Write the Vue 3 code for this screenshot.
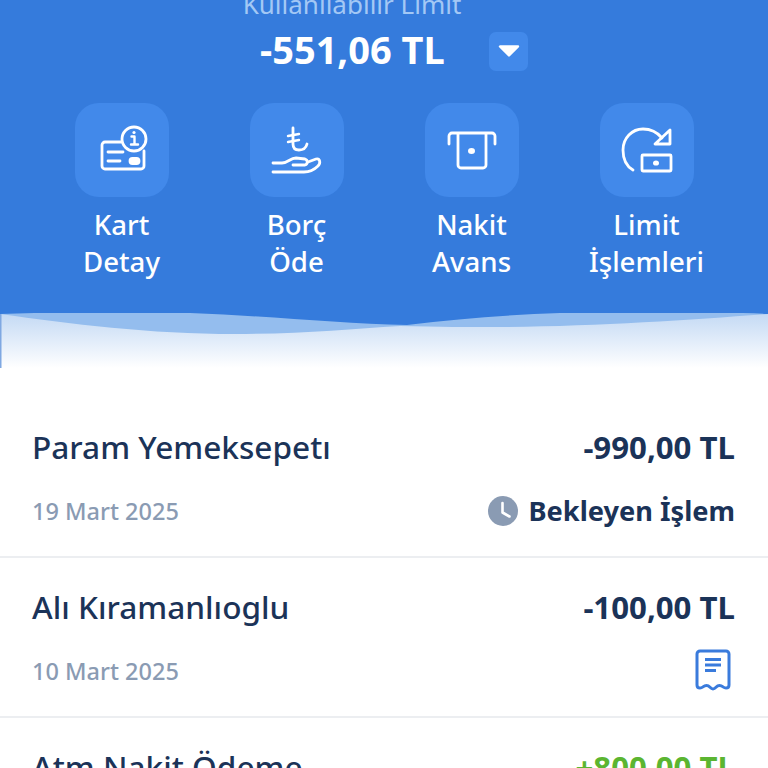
<template>
  <div class="screen">
    <section class="hero">
      <p class="limit-label">Kullanılabilir Limit</p>
      <div class="limit-row">
        <span class="limit-value">-551,06 TL</span>
        <button class="toggle-btn">
          <svg width="22" height="12" viewBox="0 0 22 12"><path d="M2 1.500h18L11 10.500z" fill="#fff" stroke="#fff" stroke-width="2.400" stroke-linejoin="round" /></svg>
        </button>
      </div>
      <div class="actions">
        <div v-for="action in actions" :key="action.id" class="action">
          <div class="action-tile">
            <svg v-if="action.id === 'card'" class="action-icon" viewBox="0 0 94 94">
              <path d="M46 39H30a3 3 0 0 0-3 3v21a3 3 0 0 0 3 3h36a3 3 0 0 0 3-3V48" />
              <path d="M33 49h15M33 58h12" />
              <rect x="55" y="55.500" width="9" height="5" rx="2.500" fill="#fff" />
              <circle cx="59" cy="36" r="12" />
              <path d="M56.500 33.500h3v8M56 41.500h7" stroke-width="2.400" />
              <circle cx="59" cy="29.500" r="1.600" fill="#fff" stroke="none" />
            </svg>
            <svg v-else-if="action.id === 'debt'" class="action-icon" viewBox="0 0 94 94">
              <path d="M43 25v16c0 4 2 6 6 6s7-2 8-6" />
              <path d="M38 33l11-2M38 39l11-2" stroke-width="2.400" />
              <path d="M23 60h9c6 0 8-5 14-5l9 1c3 1 3 5 0 6H43" />
              <path d="M58 59l8-3c4-1 5 4 2 7-4 4-8 6-14 6H23" />
            </svg>
            <svg v-else-if="action.id === 'cash'" class="action-icon" viewBox="0 0 94 94">
              <path d="M24 41v-8a3 3 0 0 1 3-3h40a3 3 0 0 1 3 3v8" />
              <path d="M33 31v31a3 3 0 0 0 3 3h22a3 3 0 0 0 3-3V31" />
              <ellipse cx="46.500" cy="48" rx="3.500" ry="3" fill="#fff" stroke="none" />
            </svg>
            <svg v-else class="action-icon" viewBox="0 0 94 94">
              <path d="M33 67C26 63 23 55 23 47c0-12 9-21 20-21 8 0 14 3 19 9" />
              <path d="M70 27v14H55z" stroke-linejoin="round" />
              <rect x="42" y="52" width="29" height="16" rx="1" />
              <ellipse cx="56" cy="60" rx="3" ry="2.600" fill="#fff" stroke="none" />
            </svg>
          </div>
          <div class="action-label">
            <span>{{ action.top }}</span>
            <span>{{ action.bottom }}</span>
          </div>
        </div>
      </div>
    </section>

    <svg class="wave" viewBox="0 0 768 55" preserveAspectRatio="none">
      <defs>
        <linearGradient id="fade" x1="0" y1="0" x2="0" y2="1">
          <stop offset="0" stop-color="#c3d9f4" />
          <stop offset="1" stop-color="#ffffff" />
        </linearGradient>
      </defs>
      <rect x="0" y="0" width="768" height="55" fill="url(#fade)" />
      <rect x="0" y="0" width="1.500" height="55" fill="#7fa8e2" />
      <path d="M0 1C70 11 150 21 235 21C300 21 350 16 400 13C440 14 470 14 490 14C590 14 690 7 768 1V0H0z" fill="#94bdee" />
      <path d="M0 1C60 -1 130 -2 190 0C270 3 340 11 407 12C480 3 550 -1 620 -1C680 -1 730 -1 768 1V0H0z" fill="#357bdc" />
    </svg>

    <section class="list">
      <div v-for="item in transactions" :key="item.title" class="row">
        <div class="row-line">
          <span class="row-title">{{ item.title }}</span>
          <span class="row-amount" :class="{ positive: item.positive }">{{ item.amount }}</span>
        </div>
        <div class="row-line row-sub">
          <span class="row-date">{{ item.date }}</span>
          <span v-if="item.pending" class="pending">
            <svg width="30" height="30" viewBox="0 0 30 30">
              <circle cx="15" cy="15" r="15" fill="#8a9bb3" />
              <path d="M14.500 7v9.500l7 4" fill="none" stroke="#fff" stroke-width="2.600" stroke-linecap="round" stroke-linejoin="round" />
            </svg>
            Bekleyen İşlem
          </span>
          <svg v-if="item.receipt" class="receipt" width="36" height="42" viewBox="0 0 36 42">
            <path d="M5 2h26a3 3 0 0 1 3 3v31c0 2-1.500 3-3 3-3 0-3-2.500-6.500-2.500S21 40 18 40s-3-3.500-6.500-3.500S8 39 5 39c-1.500 0-3-1-3-3V5a3 3 0 0 1 3-3z" fill="none" stroke="#3a7bdc" stroke-width="3" />
            <path d="M10 10.500h16M10 16h16M10 21.500h11" fill="none" stroke="#3a7bdc" stroke-width="2.800" />
          </svg>
        </div>
      </div>
    </section>
  </div>
</template>

<script setup>
const actions = [
  { id: 'card', top: 'Kart', bottom: 'Detay' },
  { id: 'debt', top: 'Borç', bottom: 'Öde' },
  { id: 'cash', top: 'Nakit', bottom: 'Avans' },
  { id: 'limit', top: 'Limit', bottom: 'İşlemleri' }
]

const transactions = [
  { title: 'Param Yemeksepetı', amount: '-990,00 TL', date: '19 Mart 2025', pending: true },
  { title: 'Alı Kıramanlıoglu', amount: '-100,00 TL', date: '10 Mart 2025', receipt: true },
  { title: 'Atm Nakit Ödeme', amount: '+800,00 TL', date: '5 Mart 2025', positive: true }
]
</script>

<style scoped>
.screen {
  width: 768px;
  height: 768px;
  overflow: hidden;
  background: #ffffff;
  font-family: "Noto Sans", "Open Sans", sans-serif;
}

.hero {
  height: 313px;
  background: #357bdc;
  overflow: hidden;
}

.limit-label {
  margin: -12px 64px 0 0;
  text-align: center;
  font-size: 26px;
  line-height: 32px;
  color: #a3c8f5;
}

.limit-row {
  display: flex;
  align-items: center;
  height: 50px;
  margin-top: 5px;
  padding-left: 260px;
}

.limit-value {
  width: 184px;
  margin-bottom: 2px;
  font-size: 38px;
  font-weight: 700;
  white-space: nowrap;
  color: #ffffff;
}

.toggle-btn {
  display: flex;
  align-items: center;
  justify-content: center;
  width: 39px;
  height: 39px;
  margin: 2px 0 0 45px;
  padding: 0;
  border: none;
  border-radius: 7px;
  background: #4289ea;
}

.actions {
  display: grid;
  grid-template-columns: repeat(4, 175px);
  padding: 0 34px;
  margin-top: 28px;
}

.action {
  display: flex;
  flex-direction: column;
  align-items: center;
}

.action-tile {
  width: 94px;
  height: 94px;
  border-radius: 24px;
  background: #4289ea;
}

.action-icon {
  display: block;
  width: 94px;
  height: 94px;
  fill: none;
  stroke: #ffffff;
  stroke-width: 2.800;
  stroke-linecap: round;
  stroke-linejoin: round;
}

.action-label {
  display: flex;
  flex-direction: column;
  align-items: center;
  margin-top: 9px;
  font-size: 27.600px;
  font-weight: 500;
  line-height: 37px;
  color: #ffffff;
}

.wave {
  display: block;
  width: 768px;
  height: 55px;
}

.list {
  padding-top: 30px;
}

.row {
  height: 160px;
  box-sizing: border-box;
  padding: 29px 33px 0 32px;
  border-bottom: 2px solid #eceef1;
}

.row-line {
  display: flex;
  justify-content: space-between;
  align-items: center;
  height: 40px;
}

.row-sub {
  margin-top: 23px;
}

.row-title {
  margin-bottom: 2px;
  font-size: 31.600px;
  font-weight: 500;
  color: #1b3358;
}

.row-amount {
  font-size: 31.200px;
  font-weight: 700;
  color: #1b3358;
}

.row-amount.positive {
  color: #5bb531;
}

.row-date {
  margin-top: 1px;
  font-size: 23.500px;
  font-weight: 500;
  color: #8a9bb3;
}

.pending {
  display: flex;
  align-items: center;
  gap: 10px;
  margin-top: 1px;
  font-size: 27.200px;
  font-weight: 700;
  color: #1b3358;
}

.receipt {
  display: block;
  margin-right: 4px;
}
</style>
